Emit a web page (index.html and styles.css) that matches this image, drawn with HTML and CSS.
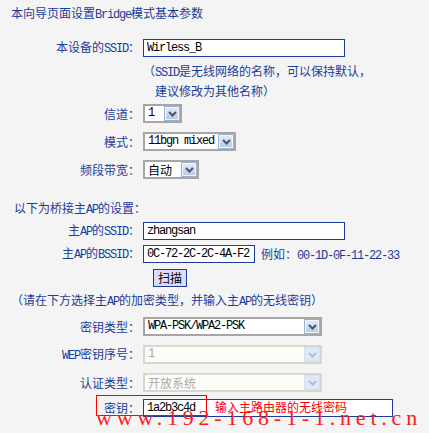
FILE: index.html
```html
<!DOCTYPE html>
<html>
<head>
<meta charset="utf-8">
<link rel="stylesheet" href="styles.css">
</head>
<body>
<div class="page">
  <div class="title">本向导页面设置<span class="en">Bridge</span>模式基本参数</div>

  <div class="row h18 m19">
    <div class="lbl">本设备的<span class="en">SSID</span>：</div>
    <div class="field"><div class="input w-ssid en">Wirless_B</div></div>
  </div>
  <div class="hint">
    <div>（<span class="en">SSID</span>是无线网络的名称，可以保持默认，</div>
    <div class="indent">建议修改为其他名称）</div>
  </div>

  <div class="row h19 m8">
    <div class="lbl">信道：</div>
    <div class="field">
      <div class="sel w-ch"><span class="v en">1</span><span class="b"><svg width="9" height="6" viewBox="0 0 9 6"><polyline points="1,1 4.5,4.5 8,1" fill="none" stroke="#4b5566" stroke-width="2"/></svg></span></div>
    </div>
  </div>
  <div class="row h19 m9">
    <div class="lbl">模式：</div>
    <div class="field">
      <div class="sel w-mode"><span class="v en">11bgn mixed</span><span class="b"><svg width="9" height="6" viewBox="0 0 9 6"><polyline points="1,1 4.5,4.5 8,1" fill="none" stroke="#4b5566" stroke-width="2"/></svg></span></div>
    </div>
  </div>
  <div class="row h19 m9">
    <div class="lbl">频段带宽：</div>
    <div class="field">
      <div class="sel w-bw"><span class="v">自动</span><span class="b"><svg width="9" height="6" viewBox="0 0 9 6"><polyline points="1,1 4.5,4.5 8,1" fill="none" stroke="#4b5566" stroke-width="2"/></svg></span></div>
    </div>
  </div>

  <div class="section">以下为桥接主<span class="en">AP</span>的设置：</div>

  <div class="row h18 m6">
    <div class="lbl">主<span class="en">AP</span>的<span class="en">SSID</span>：</div>
    <div class="field"><div class="input w-ssid en">zhangsan</div></div>
  </div>
  <div class="row h18 m5">
    <div class="lbl">主<span class="en">AP</span>的<span class="en">BSSID</span>：</div>
    <div class="field">
      <div class="input w-bssid en">0C-72-2C-2C-4A-F2</div>
      <div class="example">例如：<span class="en">00-1D-0F-11-22-33</span></div>
    </div>
  </div>
  <div class="row h18 m6">
    <div class="lbl"></div>
    <div class="field"><div class="btn">扫描</div></div>
  </div>

  <div class="hint2">（请在下方选择主<span class="en">AP</span>的加密类型，并输入主<span class="en">AP</span>的无线密钥）</div>

  <div class="row h19 m9">
    <div class="lbl">密钥类型：</div>
    <div class="field">
      <div class="sel w-key"><span class="v en">WPA-PSK/WPA2-PSK</span><span class="b"><svg width="9" height="6" viewBox="0 0 9 6"><polyline points="1,1 4.5,4.5 8,1" fill="none" stroke="#4b5566" stroke-width="2"/></svg></span></div>
    </div>
  </div>
  <div class="row h19 m9">
    <div class="lbl"><span class="en">WEP</span>密钥序号：</div>
    <div class="field">
      <div class="sel dis w-key"><span class="v en">1</span><span class="b"><svg width="9" height="6" viewBox="0 0 9 6"><polyline points="1,1 4.5,4.5 8,1" fill="none" stroke="#b3bccb" stroke-width="2"/></svg></span></div>
    </div>
  </div>
  <div class="row h19 m9">
    <div class="lbl">认证类型：</div>
    <div class="field">
      <div class="sel dis w-key"><span class="v">开放系统</span><span class="b"><svg width="9" height="6" viewBox="0 0 9 6"><polyline points="1,1 4.5,4.5 8,1" fill="none" stroke="#b3bccb" stroke-width="2"/></svg></span></div>
    </div>
  </div>
  <div class="row h18 m7">
    <div class="lbl">密钥：</div>
    <div class="field"><div class="input w-pass en">1a2b3c4d</div></div>
  </div>
</div>

<div class="mark-box"></div>
<div class="mark-note">输入主路由器的无线密码</div>
<div class="watermark">www.192-168-1-1.net.cn</div>
</body>
</html>
```

FILE: styles.css
```css
* { box-sizing: border-box; }
html, body { margin: 0; padding: 0; }
body {
  background: #f4f4f4;
  width: 429px;
  height: 433px;
  overflow: hidden;
  position: relative;
  font-family: "Noto Sans CJK SC", sans-serif;
  font-size: 12px;
  color: #1a3c9c;
}
.en { font-family: "Liberation Mono", monospace; letter-spacing: -1.2px; }

.page { padding-top: 6px; }
.title { margin-left: 11px; height: 14px; line-height: 14px; white-space: nowrap; }

.row { display: flex; align-items: center; }
.h18 { height: 18px; }
.h19 { height: 19px; }
.m5 { margin-top: 5px; }
.m6 { margin-top: 6px; }
.m7 { margin-top: 7px; }
.m8 { margin-top: 8px; }
.m9 { margin-top: 9px; }
.m19 { margin-top: 19px; }

.lbl { width: 140px; text-align: right; white-space: nowrap; line-height: 14px; }
.field { margin-left: 3px; display: flex; align-items: center; height: 100%; }

.input {
  height: 18px;
  border: 1px solid #1c3c9c;
  background: #fff;
  color: #000;
  padding-left: 3px;
  line-height: 16px;
  white-space: nowrap;
  overflow: hidden;
}
.w-ssid { width: 202px; }
.w-bssid { width: 112px; }
.w-pass { width: 250px; }

.hint { margin-top: 5px; margin-left: 143px; line-height: 17px; height: 34px; white-space: nowrap; }
.indent { padding-left: 12px; }

.sel {
  height: 19px;
  border: 2px solid #a6a6a6;
  background: #fff;
  display: flex;
  align-items: center;
  color: #000;
  white-space: nowrap;
}
.sel .v { flex: 1; padding-left: 3px; line-height: 15px; overflow: hidden; }
.sel .b {
  width: 16px;
  height: 15px;
  background: linear-gradient(#e4edf9, #b4c9e6);
  border: 1px solid #9fb3d1;
  box-shadow: inset 0 0 0 1px #f2f6fc;
  display: flex;
  align-items: center;
  justify-content: center;
}
.w-ch { width: 39px; }
.w-mode { width: 93px; }
.w-bw { width: 56px; }
.w-key { width: 179px; }

.sel.dis { border-color: #d7d7cd; background: #fdfdf8; color: #a9a9a9; }
.sel.dis .b { background: #dde9f8; border-color: #d3e0f2; box-shadow: none; }

.section { margin-top: 21px; margin-left: 14px; height: 16px; line-height: 16px; white-space: nowrap; }

.example { margin-left: 6px; white-space: nowrap; }

.btn {
  margin-left: 10px;
  width: 34px;
  height: 18px;
  background: #dcdcfa;
  border: 1px solid #1c3c9c;
  color: #000;
  text-align: center;
  line-height: 16px;
}

.hint2 { margin-top: 5px; margin-left: 11px; height: 16px; line-height: 16px; white-space: nowrap; }

.mark-box {
  position: absolute;
  left: 96px;
  top: 395px;
  width: 111px;
  height: 21px;
  border: 1px solid #ff0000;
}
.mark-note {
  position: absolute;
  left: 215px;
  top: 400px;
  color: #ff0000;
  line-height: 14px;
  white-space: nowrap;
}
.watermark {
  position: absolute;
  left: 96px;
  top: 406px;
  font-family: "Liberation Serif", serif;
  font-size: 22px;
  letter-spacing: 4.8px;
  color: #ff1a1a;
  line-height: 24px;
  white-space: nowrap;
}
```
